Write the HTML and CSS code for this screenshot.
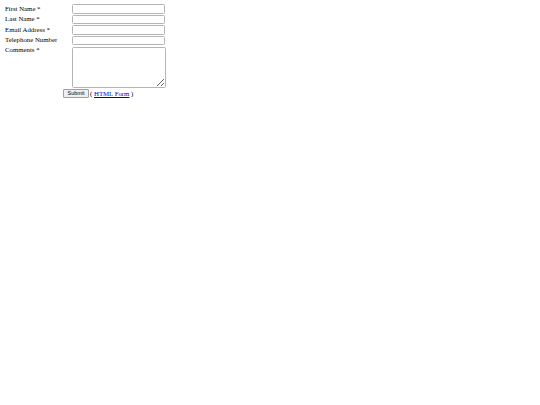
FILE: index.html
```html
<!DOCTYPE html>
<html>
<head>
<meta charset="utf-8">
<link rel="stylesheet" href="styles.css">
</head>
<body>
<form class="form">
  <div class="grid">
    <label class="lbl">First Name *</label>
    <input class="field" type="text">
    <label class="lbl">Last Name *</label>
    <input class="field" type="text">
    <label class="lbl">Email Address *</label>
    <input class="field" type="text">
    <label class="lbl">Telephone Number</label>
    <input class="field" type="text">
    <label class="lbl top">Comments *</label>
    <textarea class="area"></textarea>
  </div>
  <div class="actions">
    <button class="btn" type="button">Submit</button>
    <span class="note">( <a class="link" href="#">HTML Form</a> )</span>
  </div>
</form>
</body>
</html>
```

FILE: styles.css
```css
html, body {
  margin: 0;
  padding: 0;
  background: #fff;
}
body {
  padding: 4px 0 0 4px;
  font-family: "Liberation Serif", "Times New Roman", serif;
  font-size: 6.8px;
  color: #000;
}
.form {
  margin: 0;
}
.grid {
  display: grid;
  grid-template-columns: 68px 93px;
  row-gap: 1px;
  column-gap: 0;
  align-items: center;
}
.lbl {
  padding-left: 1px;
  line-height: 8px;
}
.lbl.top {
  align-self: start;
  padding-top: 0;
}
.field {
  box-sizing: border-box;
  width: 93px;
  height: 9.5px;
  margin: 0;
  padding: 0 1px;
  border: 1px solid #b4b4b4;
  border-radius: 1.5px;
  font-size: 6px;
  background: #fff;
}
.area {
  box-sizing: border-box;
  width: 94px;
  height: 41px;
  margin: 1px 0 0 0;
  padding: 1px;
  border: 1px solid #b4b4b4;
  border-radius: 1.5px;
  font-size: 6px;
  background: #fff;
  resize: both;
}
.actions {
  display: flex;
  align-items: center;
  gap: 1px;
  margin-top: 1px;
  padding-left: 59px;
}
.btn {
  box-sizing: border-box;
  height: 9px;
  width: 26px;
  margin: 0;
  padding: 0;
  font-family: "Liberation Sans", Arial, sans-serif;
  font-size: 5.4px;
  line-height: 7px;
  color: #000;
  background: #efefef;
  border: 1px solid #a0a0a0;
  border-radius: 1px;
}
.note {
  line-height: 8px;
}
.link {
  color: #0000ee;
  text-decoration: underline;
}
```
